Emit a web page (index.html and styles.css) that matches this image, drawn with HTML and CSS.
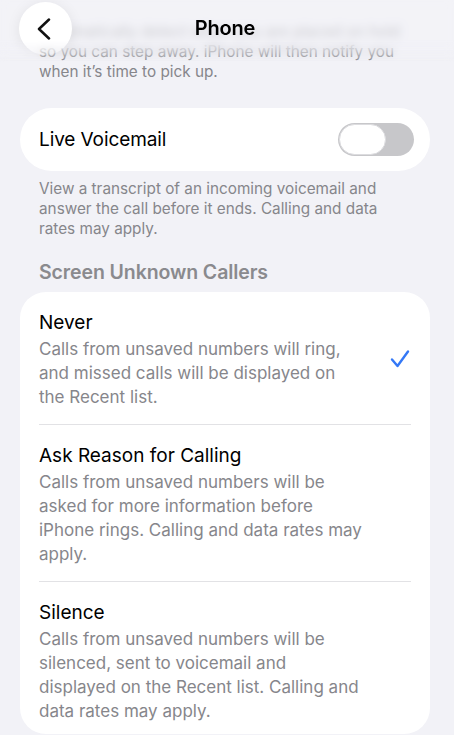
FILE: index.html
```html
<!DOCTYPE html>
<html lang="en">
<head>
  <meta charset="UTF-8" />
  <title>Phone</title>
  <meta name="viewport" content="width=device-width, initial-scale=1" />
  <link rel="stylesheet" href="styles.css">
</head>
<body>

<div class="nav">
  <div class="back-btn">
    <svg width="16" height="22" viewBox="0 0 16 22">
      <path d="M13 1.5 L3 11 L13 20.5" fill="none" stroke="#111" stroke-width="2.5" stroke-linecap="round" stroke-linejoin="round"/>
    </svg>
  </div>
  <div class="nav-title">Phone</div>
</div>

<div class="page">
  <p class="group-footer top-footer">Automatically detect when you are placed on hold so you can step away. iPhone will then notify you when it’s time to pick up.</p>

  <div class="card toggle-card">
    <span class="row-label">Live Voicemail</span>
    <div class="switch"><div class="knob"></div></div>
  </div>
  <p class="group-footer">View a transcript of an incoming voicemail and answer the call before it ends. Calling and data rates may apply.</p>

  <div class="group-header">Screen Unknown Callers</div>
  <div class="card list-card">
    <div class="option">
      <div class="option-text">
        <div class="option-title">Never</div>
        <div class="option-desc">Calls from unsaved numbers will ring,<br>and missed calls will be displayed on<br>the Recent list.</div>
      </div>
      <svg class="check" width="20" height="20" viewBox="0 0 20 20">
        <path d="M2 10.5 L7.5 17 L18 2.5" fill="none" stroke="#3478f6" stroke-width="2.4" stroke-linecap="round" stroke-linejoin="round"/>
      </svg>
    </div>
    <div class="option">
      <div class="option-text">
        <div class="option-title">Ask Reason for Calling</div>
        <div class="option-desc">Calls from unsaved numbers will be<br>asked for more information before<br>iPhone rings. Calling and data rates may<br>apply.</div>
      </div>
    </div>
    <div class="option">
      <div class="option-text">
        <div class="option-title">Silence</div>
        <div class="option-desc">Calls from unsaved numbers will be<br>silenced, sent to voicemail and<br>displayed on the Recent list. Calling and<br>data rates may apply.</div>
      </div>
    </div>
  </div>
</div>

</body>
</html>
```

FILE: styles.css
```css
* { box-sizing: border-box; font-family: 'Inter', 'Liberation Sans', sans-serif; }
body {
  margin: 0;
  background: #f2f2f7;
  width: 454px;
  height: 735px;
  overflow: hidden;
  position: relative;
}

/* Top bar floats over the scrolled content */
.nav {
  position: absolute;
  top: 0; left: 0;
  width: 100%;
  height: 62px;
  display: flex;
  align-items: center;
  justify-content: center;
  backdrop-filter: blur(4px);
  -webkit-mask-image: linear-gradient(#000 65%, transparent);
  mask-image: linear-gradient(#000 65%, transparent);
  background: rgba(242, 242, 247, 0.65);
  z-index: 10;
}
.back-btn {
  position: absolute;
  top: 2px;
  left: 19px;
  width: 53px;
  height: 53px;
  border-radius: 50%;
  background: #fff;
  display: flex;
  align-items: center;
  justify-content: center;
  padding-right: 4px;
  box-shadow: 0 2px 14px rgba(0, 0, 0, 0.08);
}
.nav-title {
  margin: -6px 4px 0 0;
  font-size: 20px;
  font-weight: 600;
  color: #000;
  letter-spacing: -0.2px;
}

.page {
  padding: 0 24px 0 20px;
}
.group-footer {
  margin: 0;
  padding: 0 19px;
  font-size: 15.3px;
  line-height: 20px;
  color: #86868b;
}
.top-footer {
  padding-top: 22px;
  margin-bottom: 26px;
}

.card {
  background: #fff;
}
.toggle-card {
  height: 63px;
  border-radius: 32px;
  display: flex;
  align-items: center;
  justify-content: space-between;
  padding: 0 16px 0 19px;
  margin-bottom: 8px;
}
.row-label {
  font-size: 19px;
  color: #000;
  letter-spacing: -0.1px;
}
.switch {
  width: 76px;
  height: 33px;
  border-radius: 17px;
  background: #c7c7ca;
  padding: 1px;
}
.knob {
  width: 47px;
  height: 31px;
  border-radius: 16px;
  background: #fff;
  border: 1px solid #dcdcdf;
}

.group-header {
  padding: 21px 19px 0;
  height: 53px;
  font-size: 19.5px;
  line-height: 24px;
  font-weight: 600;
  color: #8a8a8e;
  letter-spacing: -0.1px;
}

.list-card {
  border-radius: 26px;
  padding: 0 19px;
}
.option {
  display: flex;
  align-items: center;
  padding: 17px 0 15px;
  border-bottom: 1px solid #e2e2e5;
}
.option:last-child {
  border-bottom: none;
  padding-bottom: 11px;
}
.option-text {
  width: 350px;
  white-space: nowrap;
}
.option-title {
  font-size: 19px;
  line-height: 28px;
  color: #000;
}
.option-desc {
  font-size: 17px;
  line-height: 24px;
  color: #86868b;
}
.check {
  margin-left: auto;
  margin-right: 1px;
}
```
